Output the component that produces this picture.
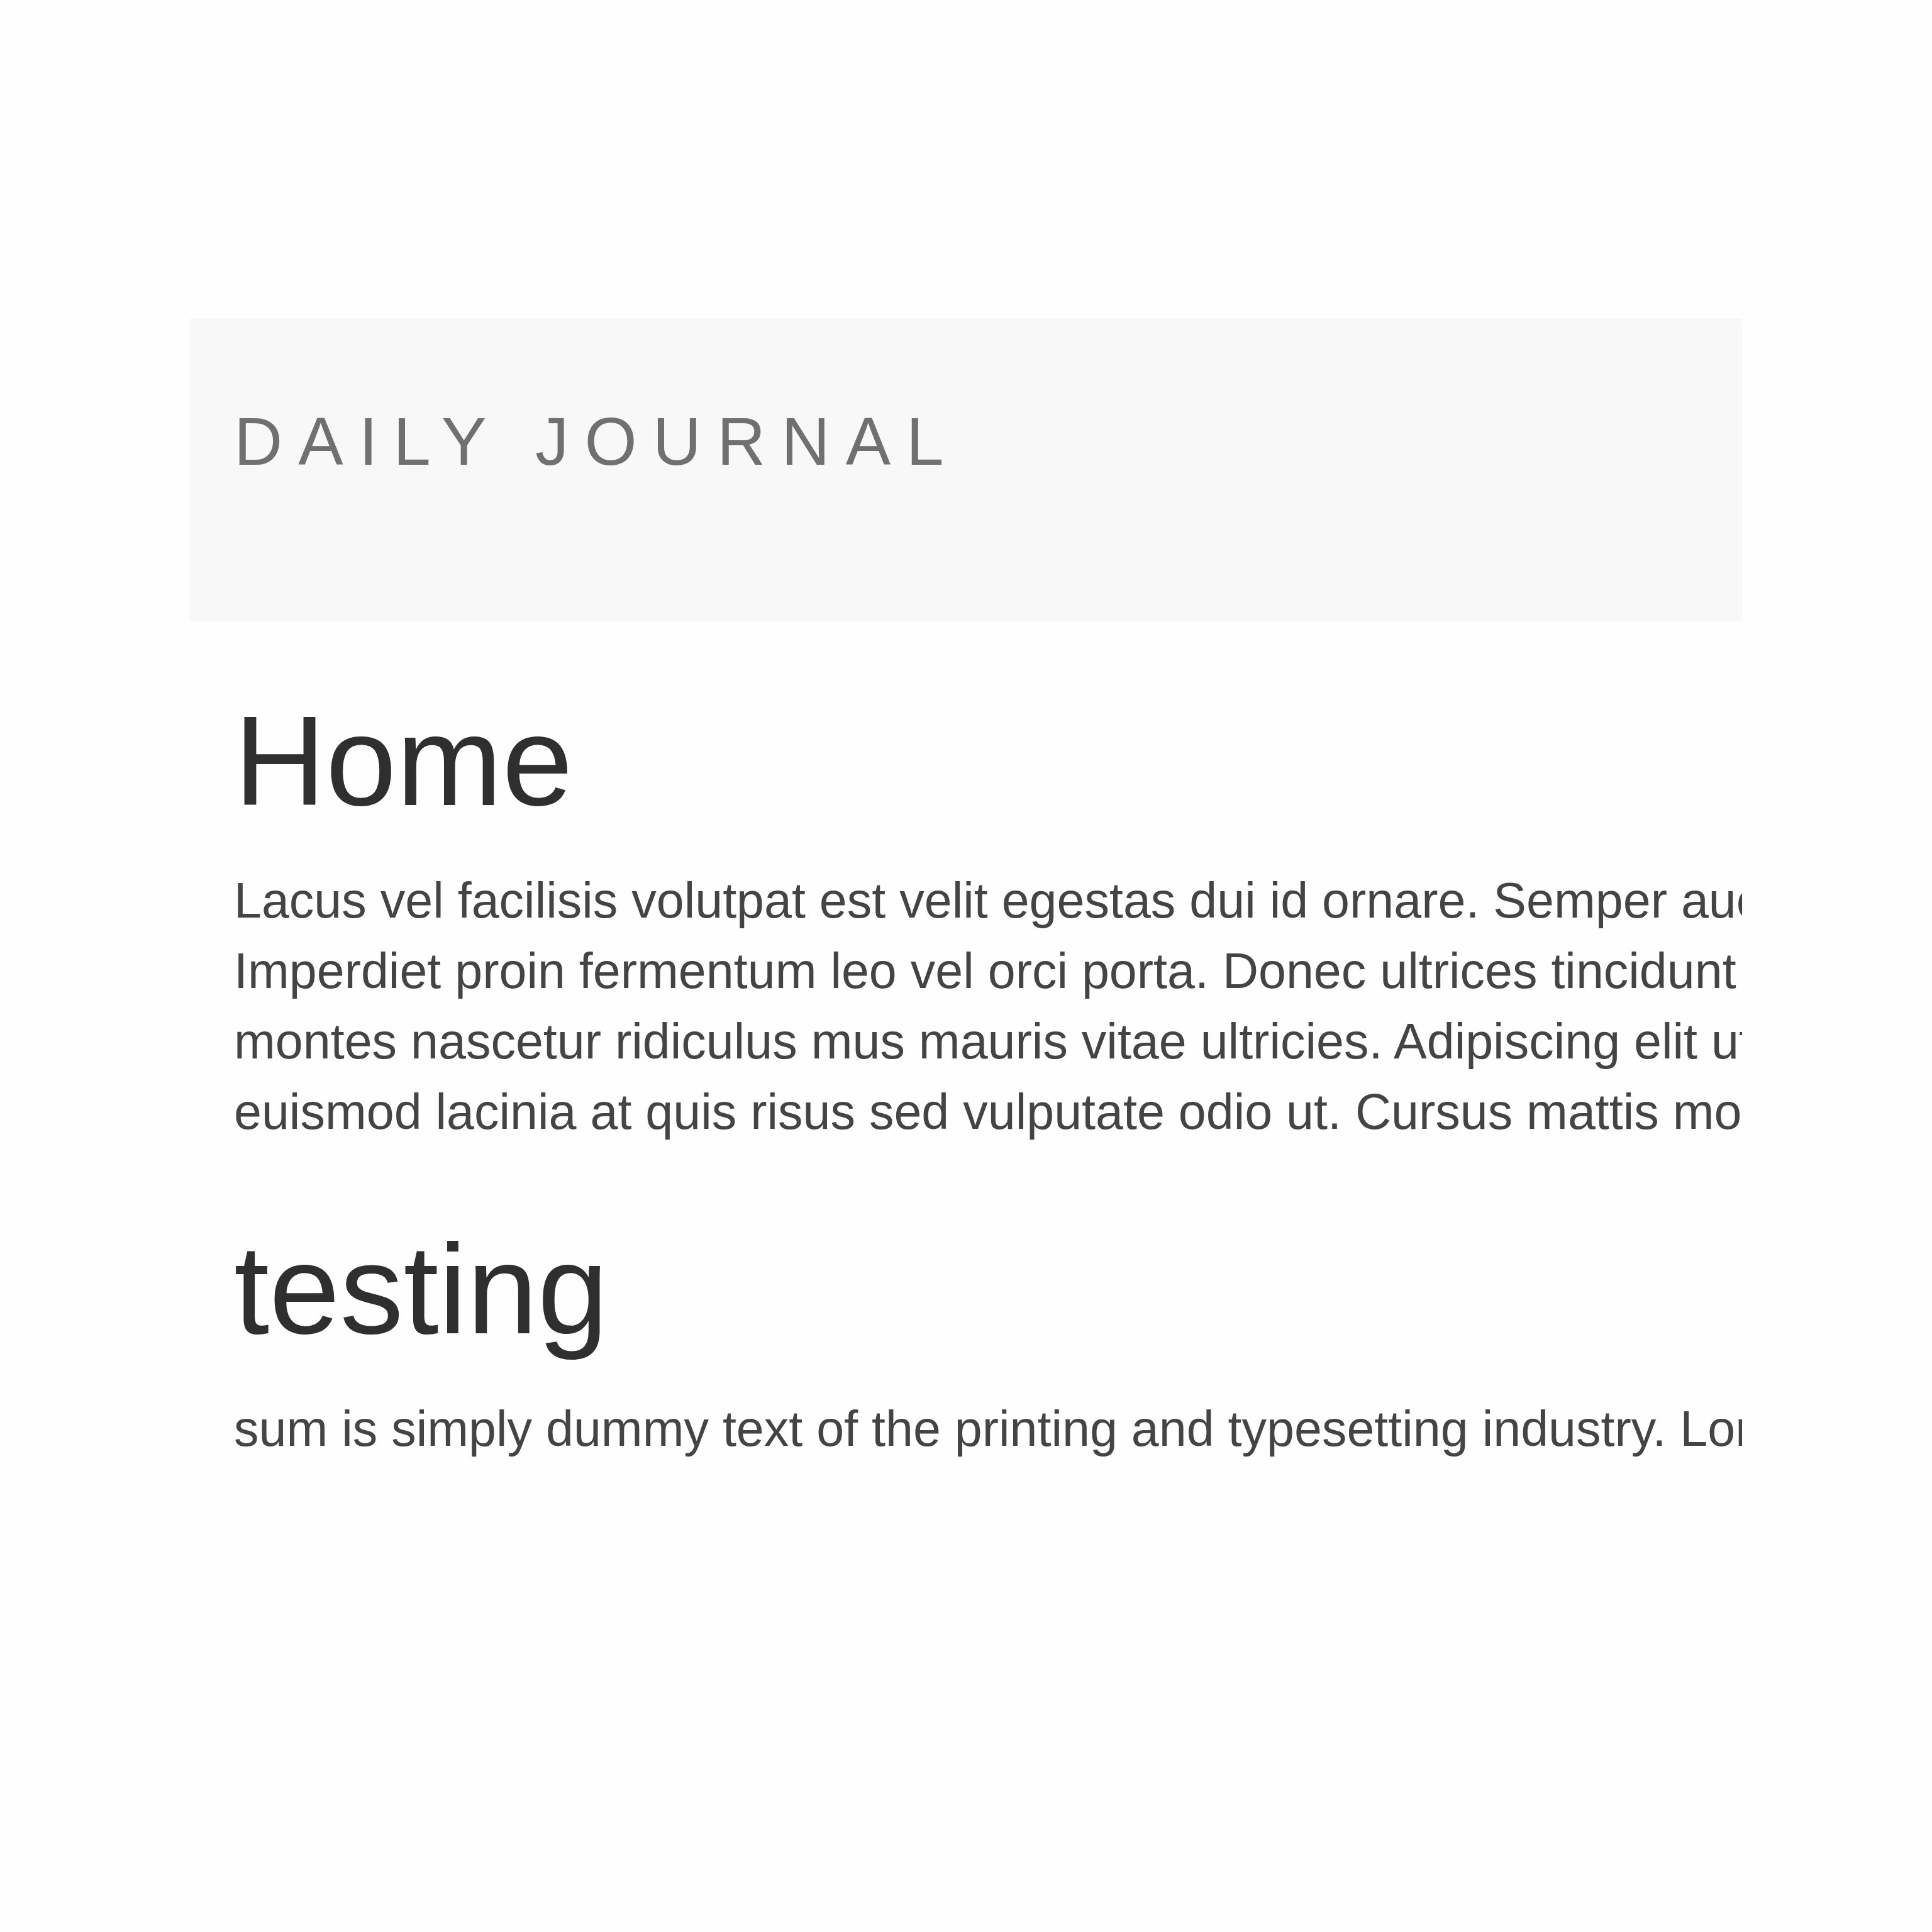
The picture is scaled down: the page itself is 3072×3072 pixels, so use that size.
const lines = [
  "Lacus vel facilisis volutpat est velit egestas dui id ornare. Semper auctor neque vitae tempus quam pellentesque.",
  "Imperdiet proin fermentum leo vel orci porta. Donec ultrices tincidunt arcu non sodales neque sodales ut etiam.",
  "montes nascetur ridiculus mus mauris vitae ultricies. Adipiscing elit ut aliquam purus sit amet luctus venenatis.",
  "euismod lacinia at quis risus sed vulputate odio ut. Cursus mattis molestie a iaculis at erat pellentesque.",
];

function Post({ title, rows, className }) {
  return (
    <div className={className}>
      <h1 className="text-[202px] leading-none font-normal text-[#2f2f2f]">{title}</h1>
      <div className="mt-[65px] text-[79px] leading-[112px] text-[#444]">
        {rows.map((r) => (
          <p key={r} className="whitespace-nowrap">
            {r}
          </p>
        ))}
      </div>
    </div>
  );
}

export default function App() {
  return (
    <div className="w-[3072px] h-[3072px] bg-[#fefefe] pt-[506px] font-['Liberation_Sans',Arial,sans-serif]">
      {/* header bar */}
      <div className="ml-[302px] w-[2468px] h-[482px] bg-[#f8f8f8] pl-[70px] pt-[143px]">
        <span className="block text-[107px] leading-none tracking-[25px] text-[#707070]">
          DAILY JOURNAL
        </span>
      </div>

      {/* posts */}
      <div className="ml-[302px] w-[2468px] overflow-hidden pl-[70px]">
        <Post title="Home" rows={lines} className="mt-[121px]" />
        <Post
          title="testing"
          rows={[
            "sum is simply dummy text of the printing and typesetting industry. Lorem Ipsum has been the industry's standard.",
          ]}
          className="mt-[125px]"
        />
      </div>
    </div>
  );
}
